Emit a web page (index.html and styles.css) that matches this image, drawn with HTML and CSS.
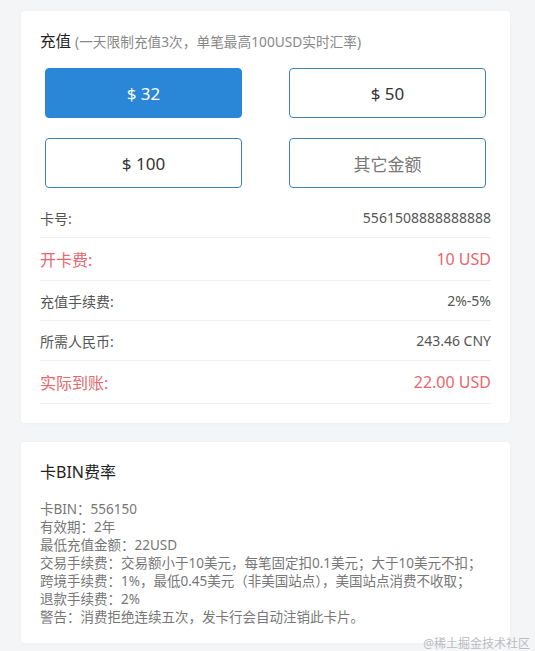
FILE: index.html
```html
<!DOCTYPE html>
<html lang="zh-CN">
<head>
<meta charset="utf-8" />
<title>充值</title>
<link rel="stylesheet" href="styles.css">
</head>
<body>
	<div class="card">
		<h3 class="card-title">充值 <span class="tip">(一天限制充值3次，单笔最高100USD实时汇率)</span></h3>
		<ul class="amounts">
			<li class="amount active">$ 32</li>
			<li class="amount">$ 50</li>
			<li class="amount">$ 100</li>
			<li class="amount other">其它金额</li>
		</ul>
		<ul class="info">
			<li class="info-row"><span>卡号:</span><span>5561508888888888</span></li>
			<li class="info-row red"><span>开卡费:</span><span>10 USD</span></li>
			<li class="info-row"><span>充值手续费:</span><span>2%-5%</span></li>
			<li class="info-row"><span>所需人民币:</span><span>243.46 CNY</span></li>
			<li class="info-row red"><span>实际到账:</span><span>22.00 USD</span></li>
		</ul>
	</div>

	<div class="card">
		<h3 class="card-title big">卡BIN费率</h3>
		<div class="rate">
			<p>卡BIN：556150</p>
			<p>有效期：2年</p>
			<p>最低充值金额：22USD</p>
			<p>交易手续费：交易额小于10美元，每笔固定扣0.1美元；大于10美元不扣；</p>
			<p>跨境手续费：1%，最低0.45美元（非美国站点），美国站点消费不收取；</p>
			<p>退款手续费：2%</p>
			<p>警告：消费拒绝连续五次，发卡行会自动注销此卡片。</p>
		</div>
	</div>

	<div class="watermark">@稀土掘金技术社区</div>
</body>
</html>
```

FILE: styles.css
```css
* {
	box-sizing:border-box;
}
body {
	margin:0;
	padding:11px 25px 9px 21px;
	background:#f3f5f7;
	font-family:"Noto Sans", "Noto Sans CJK SC", sans-serif;
	color:#333;
	position:relative;
	min-height:651px;
}
ul {
	list-style:none;
	margin:0;
	padding:0;
}
p {
	margin:0;
}
.card {
	background:#fff;
	border-radius:4px;
	padding:20px 19px 19px 19px;
	box-shadow:0 0 4px rgba(0,0,0,0.03);
}
.card + .card {
	margin-top:19px;
	padding-bottom:17px;
}
.card-title {
	margin:0;
	font-size:15.5px;
	font-weight:normal;
	line-height:20px;
	color:#222;
}
.card-title.big {
	font-size:16px;
}
.tip {
	font-size:13.7px;
	color:#888;
}
.amounts {
	display:grid;
	grid-template-columns:1fr 1fr;
	column-gap:47px;
	row-gap:20px;
	padding:0 5px;
	margin-top:16px;
}
.amount {
	height:50px;
	border:1px solid #3b82bd;
	border-radius:4px;
	display:flex;
	align-items:center;
	justify-content:center;
	font-size:17px;
	color:#333;
}
.amount.active {
	background:#2a86d6;
	border-color:#2a86d6;
	color:#fff;
}
.amount.other {
	color:#777;
}
.info {
	margin-top:10px;
}
.info-row {
	height:40px;
	display:flex;
	justify-content:space-between;
	align-items:center;
	border-bottom:1px solid #f1f2f4;
	font-size:14px;
	color:#555;
}
.info-row.red {
	height:43px;
	font-size:16px;
	color:#e8666c;
}
.rate {
	margin-top:18px;
	font-size:13.5px;
	line-height:18px;
	color:#777;
}
.watermark {
	position:absolute;
	right:5px;
	bottom:1px;
	font-size:12px;
	line-height:14px;
	color:#b9bcc0;
}
```
